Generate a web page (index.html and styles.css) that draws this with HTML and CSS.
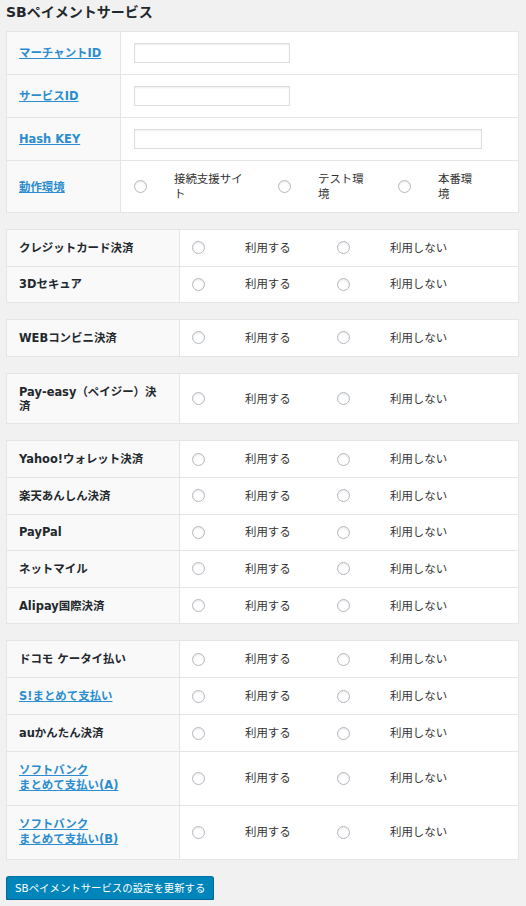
FILE: index.html
```html
<!DOCTYPE html>
<html lang="ja">
<head>
<meta charset="utf-8">
<title>SBペイメントサービス</title>
<link rel="stylesheet" href="styles.css">
</head>
<body>
<div class="wrap">
  <h2 class="title">SBペイメントサービス</h2>

  <div class="card card-main">
    <div class="row">
      <div class="th"><a href="#">マーチャントID</a></div>
      <div class="td"><input type="text" class="text-input short"></div>
    </div>
    <div class="row">
      <div class="th"><a href="#">サービスID</a></div>
      <div class="td"><input type="text" class="text-input short"></div>
    </div>
    <div class="row">
      <div class="th"><a href="#">Hash KEY</a></div>
      <div class="td"><input type="text" class="text-input long"></div>
    </div>
    <div class="row">
      <div class="th"><a href="#">動作環境</a></div>
      <div class="td env">
        <input type="radio" name="env" class="radio"><label class="lbl lbl-a">接続支援サイト</label>
        <input type="radio" name="env" class="radio"><label class="lbl lbl-b">テスト環境</label>
        <input type="radio" name="env" class="radio"><label class="lbl lbl-c">本番環境</label>
      </div>
    </div>
  </div>

  <div class="card card-pay">
    <div class="row">
      <div class="th">クレジットカード決済</div>
      <div class="td opts"><input type="radio" name="p1" class="radio"><label class="lbl">利用する</label><input type="radio" name="p1" class="radio"><label class="lbl">利用しない</label></div>
    </div>
    <div class="row">
      <div class="th">3Dセキュア</div>
      <div class="td opts"><input type="radio" name="p2" class="radio"><label class="lbl">利用する</label><input type="radio" name="p2" class="radio"><label class="lbl">利用しない</label></div>
    </div>
  </div>

  <div class="card card-pay">
    <div class="row">
      <div class="th">WEBコンビニ決済</div>
      <div class="td opts"><input type="radio" name="p3" class="radio"><label class="lbl">利用する</label><input type="radio" name="p3" class="radio"><label class="lbl">利用しない</label></div>
    </div>
  </div>

  <div class="card card-pay">
    <div class="row">
      <div class="th">Pay-easy（ペイジー）決済</div>
      <div class="td opts"><input type="radio" name="p4" class="radio"><label class="lbl">利用する</label><input type="radio" name="p4" class="radio"><label class="lbl">利用しない</label></div>
    </div>
  </div>

  <div class="card card-pay">
    <div class="row">
      <div class="th">Yahoo!ウォレット決済</div>
      <div class="td opts"><input type="radio" name="p5" class="radio"><label class="lbl">利用する</label><input type="radio" name="p5" class="radio"><label class="lbl">利用しない</label></div>
    </div>
    <div class="row">
      <div class="th">楽天あんしん決済</div>
      <div class="td opts"><input type="radio" name="p6" class="radio"><label class="lbl">利用する</label><input type="radio" name="p6" class="radio"><label class="lbl">利用しない</label></div>
    </div>
    <div class="row">
      <div class="th">PayPal</div>
      <div class="td opts"><input type="radio" name="p7" class="radio"><label class="lbl">利用する</label><input type="radio" name="p7" class="radio"><label class="lbl">利用しない</label></div>
    </div>
    <div class="row">
      <div class="th">ネットマイル</div>
      <div class="td opts"><input type="radio" name="p8" class="radio"><label class="lbl">利用する</label><input type="radio" name="p8" class="radio"><label class="lbl">利用しない</label></div>
    </div>
    <div class="row">
      <div class="th">Alipay国際決済</div>
      <div class="td opts"><input type="radio" name="p9" class="radio"><label class="lbl">利用する</label><input type="radio" name="p9" class="radio"><label class="lbl">利用しない</label></div>
    </div>
  </div>

  <div class="card card-pay">
    <div class="row">
      <div class="th">ドコモ ケータイ払い</div>
      <div class="td opts"><input type="radio" name="p10" class="radio"><label class="lbl">利用する</label><input type="radio" name="p10" class="radio"><label class="lbl">利用しない</label></div>
    </div>
    <div class="row">
      <div class="th th-link"><a href="#">S!まとめて支払い</a></div>
      <div class="td opts"><input type="radio" name="p11" class="radio"><label class="lbl">利用する</label><input type="radio" name="p11" class="radio"><label class="lbl">利用しない</label></div>
    </div>
    <div class="row">
      <div class="th">auかんたん決済</div>
      <div class="td opts"><input type="radio" name="p12" class="radio"><label class="lbl">利用する</label><input type="radio" name="p12" class="radio"><label class="lbl">利用しない</label></div>
    </div>
    <div class="row">
      <div class="th th-link2"><a href="#">ソフトバンク<br>まとめて支払い(A)</a></div>
      <div class="td opts"><input type="radio" name="p13" class="radio"><label class="lbl">利用する</label><input type="radio" name="p13" class="radio"><label class="lbl">利用しない</label></div>
    </div>
    <div class="row">
      <div class="th th-link2"><a href="#">ソフトバンク<br>まとめて支払い(B)</a></div>
      <div class="td opts"><input type="radio" name="p14" class="radio"><label class="lbl">利用する</label><input type="radio" name="p14" class="radio"><label class="lbl">利用しない</label></div>
    </div>
  </div>

  <button type="button" class="btn-primary">SBペイメントサービスの設定を更新する</button>
</div>
</body>
</html>
```

FILE: styles.css
```css
html, body {
  margin: 0;
  padding: 0;
  background: #f1f1f1;
}

body {
  font-family: "DejaVu Sans", "Noto Sans CJK JP", sans-serif;
  font-size: 11.44px;
  color: #333;
}

.wrap {
  padding: 0 7px 0 6px;
}

.title {
  margin: 0 0 10px;
  padding-top: 3px;
  font-size: 14px;
  line-height: 18px;
  font-weight: bold;
  color: #23282d;
}

.card {
  background: #fff;
  border: 1px solid #e5e5e5;
  margin-bottom: 16px;
}

.row {
  display: grid;
  border-top: 1px solid #e5e5e5;
}

.row:first-child {
  border-top: none;
}

.card-main .row {
  grid-template-columns: 114px 1fr;
  min-height: 42px;
}

.card-pay .row {
  grid-template-columns: 173px 1fr;
}

.th {
  background: #f9f9f9;
  border-right: 1px solid #e5e5e5;
  font-weight: bold;
  color: #23282d;
  line-height: 14px;
  display: flex;
  align-items: center;
  box-sizing: border-box;
}

.card-main .th {
  padding: 0 10px 0 12px;
}

.card-pay .th {
  padding: 10.8px 14px 10.8px 12px;
}

.th a {
  color: #2b8dcf;
  text-decoration: underline;
}

.th-link {
  padding-top: 11.5px !important;
  padding-bottom: 11px !important;
}

.th-link2 {
  line-height: 15.6px;
}

.td {
  display: flex;
  align-items: center;
}

.card-main .td {
  padding-left: 13px;
}

.text-input {
  box-sizing: border-box;
  height: 20px;
  margin: 0;
  padding: 0 4px;
  border: 1px solid #ddd;
  box-shadow: inset 0 1px 2px rgba(0, 0, 0, 0.07);
  background: #fff;
  font: inherit;
}

.text-input.short {
  width: 156px;
}

.text-input.long {
  width: 348px;
}

.radio {
  -webkit-appearance: none;
  appearance: none;
  box-sizing: border-box;
  width: 13px;
  height: 13px;
  margin: 0;
  border: 1px solid #b4b9be;
  border-radius: 50%;
  background: #fff;
  box-shadow: inset 0 1px 2px rgba(0, 0, 0, 0.1);
}

.lbl {
  color: #333;
  line-height: 14.5px;
}

.env {
  display: grid !important;
  grid-template-columns: 40px 104px 40px 80px 40px 1fr;
  align-items: center;
  padding-top: 11px;
  padding-bottom: 11px;
}

.lbl-a { max-width: 72px; }
.lbl-b { max-width: 50px; }
.lbl-c { max-width: 40px; }

.opts {
  display: grid !important;
  grid-template-columns: 53px 92px 53px 1fr;
  align-items: center;
  padding-left: 12px;
}

.opts .lbl {
  line-height: 14px;
}

.btn-primary {
  display: block;
  height: 24px;
  margin: 0;
  padding: 0 8px;
  background: #0085ba;
  border: 1px solid;
  border-color: #0073aa #006799 #006799;
  border-radius: 3px;
  box-shadow: 0 1px 0 #006799;
  color: #fff;
  font-family: "DejaVu Sans", "Noto Sans CJK JP", sans-serif;
  font-size: 10.4px;
  line-height: 22px;
  white-space: nowrap;
}
```
